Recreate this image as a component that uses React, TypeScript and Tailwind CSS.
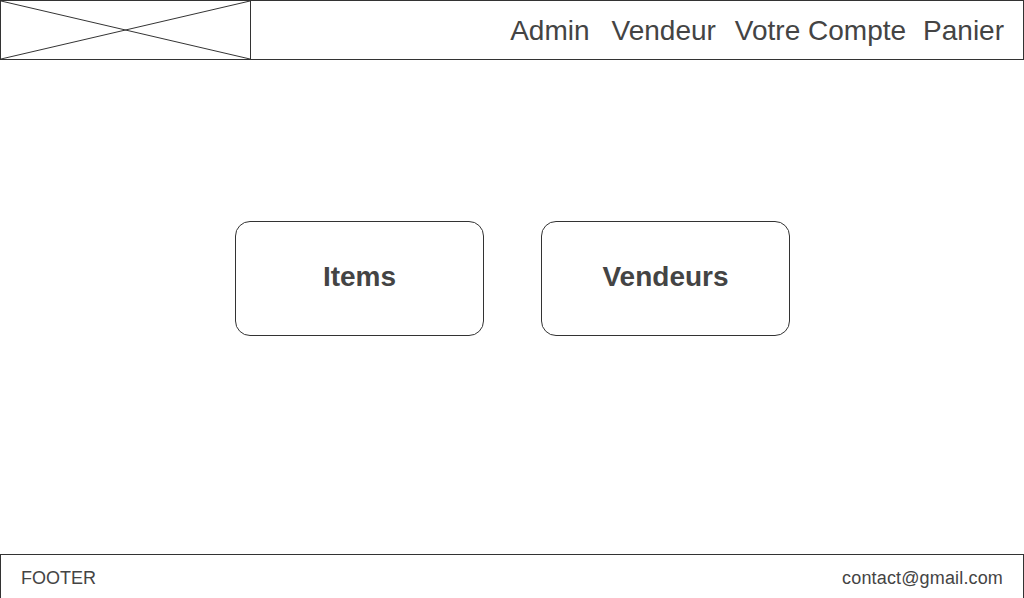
import React from 'react';

const navItems = [
  { label: 'Admin', cls: '' },
  { label: 'Vendeur', cls: 'ml-[22px]' },
  { label: 'Votre Compte', cls: 'ml-[19px]' },
  { label: 'Panier', cls: 'ml-[17px]' },
];

export default function App() {
  return (
    <div className="flex h-[598px] w-[1024px] flex-col overflow-hidden bg-white font-['Liberation_Sans',Arial,sans-serif] text-[#444]">
      <header className="flex h-[60px] shrink-0 border border-[#333]">
        <div className="relative h-full w-[250px] shrink-0 border-r border-[#333]">
          <svg className="absolute inset-0 h-full w-full" viewBox="0 0 250 58" preserveAspectRatio="none">
            <line x1="0" y1="0" x2="250" y2="58" stroke="#333" strokeWidth="1" />
            <line x1="0" y1="58" x2="250" y2="0" stroke="#333" strokeWidth="1" />
          </svg>
        </div>
        <nav className="ml-auto flex items-center pr-[19px] pt-[2px] text-[28px] leading-none">
          {navItems.map((item) => (
            <span key={item.label} className={item.cls}>
              {item.label}
            </span>
          ))}
        </nav>
      </header>

      <main className="flex flex-1 gap-[57px] pl-[235px] pt-[161px]">
        {['Items', 'Vendeurs'].map((label) => (
          <button
            key={label}
            className="flex h-[115px] w-[249px] items-center justify-center rounded-[15px] border border-[#333] pb-[4px] text-[28px] font-bold"
          >
            {label}
          </button>
        ))}
      </main>

      <footer className="flex h-[44px] shrink-0 items-center justify-between border-x border-t border-[#333] px-[20px] pt-[4px] text-[18px]">
        <span>FOOTER</span>
        <span className="tracking-[0.15px]">contact@gmail.com</span>
      </footer>
    </div>
  );
}
